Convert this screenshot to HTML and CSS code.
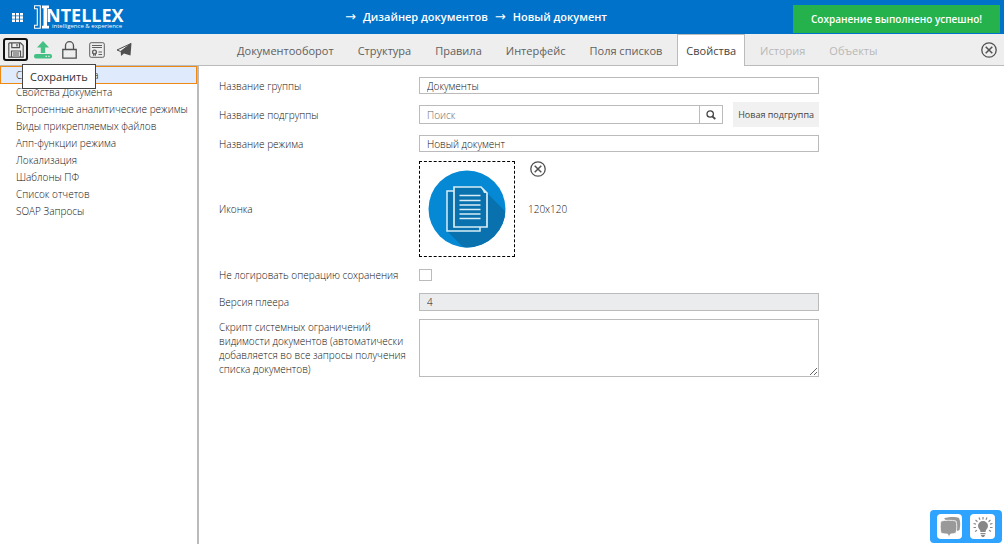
FILE: index.html
```html
<!DOCTYPE html>
<html lang="ru">
<head>
<meta charset="utf-8">
<title>Дизайнер документов</title>
<link rel="stylesheet" href="styles.css">
</head>
<body>
<header class="header">
  <button class="apps" type="button" aria-label="Меню">
    <svg width="11" height="9" viewBox="0 0 11 9" fill="#fff"><path d="M0 0h3v2.400H0zM4 0h3v2.400H4zM8 0h3v2.400H8zM0 3.300h3v2.400H0zM4 3.300h3v2.400H4zM8 3.300h3v2.400H8zM0 6.600h3V9H0zM4 6.600h3V9H4zM8 6.600h3V9H8z"/></svg>
  </button>
  <a class="logo" href="#" aria-label="Intellex">
    <svg width="94" height="25" viewBox="0 0 94 25">
      <path d="M0 .7h6.300v22.600H0M0 3.700h3.300v16.600H0M.5.7v3M.5 20.300v3" fill="none" stroke="#fff" stroke-width="1.100"/>
      <path d="M8 .5h7v2.700h-2v17.600h2v2.700H8v-2.700h1.500V3.200H8z" fill="#fff"/>
      <text class="logo-name" x="12" y="17">NTELLEX</text>
      <text class="logo-sub" x="18" y="23">intelligence &amp; experience</text>
    </svg>
  </a>
  <nav class="crumbs" aria-label="Путь">
    <span class="arrow">→</span><a href="#">Дизайнер документов</a>
    <span class="arrow">→</span><a href="#">Новый документ</a>
  </nav>
  <div class="toast" role="status">Сохранение выполнено успешно!</div>
</header>

<div class="toolbar">
  <div class="tools">
    <div class="tool-wrap">
      <button class="tool tool-focus" type="button" aria-label="Сохранить">
        <svg width="16" height="16" viewBox="0 0 16 16" fill="none" stroke="#505050" stroke-width="1.200"><path d="M1.500 .8h11l2.700 2.700v11.700H.8V1.500zM3.800 1v4.700h7.700V1M9 2v2.500M3.500 15V9h9v6M5 11h6M5 13h6"/></svg>
      </button>
      <span class="tooltip" role="tooltip">Сохранить</span>
    </div>
    <button class="tool" type="button" aria-label="Выгрузить">
      <svg width="18" height="18" viewBox="0 0 18 18"><path d="M9 0l6 6.500h-3.800V12H6.800V6.500H3z" fill="#45c084"/><rect y="13" width="18" height="4.600" rx="2" fill="#45c084"/><path d="M11.500 15.300h1.300M14.300 15.300h1.300" stroke="#eee" stroke-width="1.300"/></svg>
    </button>
    <button class="tool" type="button" aria-label="Заблокировать">
      <svg width="15" height="18" viewBox="0 0 15 18" fill="none" stroke="#505050" stroke-width="1.300"><path d="M.8 8.500h13.400v8.700H.8zM3.500 8.500V4.700a4 4 0 0 1 8 0v3.800"/></svg>
    </button>
    <button class="tool" type="button" aria-label="Сертификат">
      <svg width="16" height="16" viewBox="0 0 16 16" fill="none" stroke="#606060"><rect x=".7" y=".7" width="14.600" height="14.600" rx="1.500"/><path d="M3 3.500h10M3 5.500h10M9.500 10h3.500M9.500 12.500h3.500"/><circle cx="5.500" cy="10" r="1.900" stroke-width="1.400"/><path d="M4.500 11.500v2l1-.6 1 .6v-2"/></svg>
    </button>
    <button class="tool" type="button" aria-label="Отправить">
      <svg width="16" height="15" viewBox="0 0 16 15"><path d="M15 1.500L1 8l3.700 1.500z" fill="#eee" stroke="#505050"/><path d="M15.500 1L4.700 9.300 5 14l3-2.500 6.500 2z" fill="#505050"/></svg>
    </button>
  </div>
  <nav class="tabs">
    <a class="tab" href="#">Документооборот</a>
    <a class="tab" href="#">Структура</a>
    <a class="tab" href="#">Правила</a>
    <a class="tab" href="#">Интерфейс</a>
    <a class="tab" href="#">Поля списков</a>
    <a class="tab tab-active" href="#" aria-current="page">Свойства</a>
    <a class="tab tab-off" href="#">История</a>
    <a class="tab tab-off" href="#">Объекты</a>
  </nav>
  <button class="close" type="button" aria-label="Закрыть">
    <svg width="16" height="16" viewBox="0 0 16 16" fill="none" stroke="#505050" stroke-width="1.300"><circle cx="8" cy="8" r="7.200"/><path d="M4.700 4.700l6.600 6.600M11.300 4.700l-6.600 6.600" stroke-width="1.500"/></svg>
  </button>
</div>

<div class="body">
  <nav class="side">
    <a class="side-item side-active" href="#">Свойства режима</a>
    <a class="side-item" href="#">Свойства Документа</a>
    <a class="side-item" href="#">Встроенные аналитические режимы</a>
    <a class="side-item" href="#">Виды прикрепляемых файлов</a>
    <a class="side-item" href="#">Апп-функции режима</a>
    <a class="side-item" href="#">Локализация</a>
    <a class="side-item" href="#">Шаблоны ПФ</a>
    <a class="side-item" href="#">Список отчетов</a>
    <a class="side-item" href="#">SOAP Запросы</a>
  </nav>
  <main class="main">
    <form class="form">
      <div class="row">
        <label for="group">Название группы</label>
        <input class="field" id="group" type="text" value="Документы">
      </div>
      <div class="row">
        <label for="subgroup">Название подгруппы</label>
        <div class="sub">
          <div class="search">
            <input class="search-input" id="subgroup" type="text" placeholder="Поиск">
            <button class="search-btn" type="button" aria-label="Найти">
              <svg width="10" height="10" viewBox="0 0 10 10" fill="none" stroke="#444"><circle cx="4.200" cy="4" r="3.200" stroke-width="1.300"/><path d="M6.300 6.300L9.300 9" stroke-width="1.800"/></svg>
            </button>
          </div>
          <button class="new-btn" type="button">Новая подгруппа</button>
        </div>
      </div>
      <div class="row">
        <label for="mode">Название режима</label>
        <input class="field" id="mode" type="text" value="Новый документ">
      </div>
      <div class="row row-icon">
        <span>Иконка</span>
        <div class="icon-field">
          <div class="icon-box">
            <svg width="78" height="78" viewBox="0 0 78 78">
              <defs><clipPath id="disc"><circle cx="39" cy="39" r="38.500"/></clipPath></defs>
              <circle cx="39" cy="39" r="38.500" fill="#0689d4"/>
              <path d="M58 22l30 30v40H50L19 61l34-5z" fill="#0871ae" clip-path="url(#disc)"/>
              <path d="M19 21h7v36h26v4H19z" fill="#0871ae"/>
              <path d="M26 21h-7v40h33v-4" fill="none" stroke="#d8edf5" stroke-width="1.500"/>
              <path d="M26 17h27l6 6v34H26z" fill="#0871ae" stroke="#d8edf5" stroke-width="1.700"/>
              <path d="M53 17l6 6h-3z" fill="#d8edf5"/>
              <path d="M31.500 25.500h21M31.500 30.500h21M31.500 35h21M31.500 39.500h21M31.500 44h21M31.500 48.500h21" stroke="#d8edf5" stroke-width="1.500"/>
            </svg>
          </div>
          <div class="icon-info">
            <button class="clear" type="button" aria-label="Удалить иконку">
              <svg width="16" height="16" viewBox="0 0 16 16" fill="none" stroke="#505050" stroke-width="1.300"><circle cx="8" cy="8" r="7.200"/><path d="M4.700 4.700l6.600 6.600M11.300 4.700l-6.600 6.600" stroke-width="1.500"/></svg>
            </button>
            <span>120x120</span>
          </div>
        </div>
      </div>
      <div class="row row-check">
        <label for="nolog">Не логировать операцию сохранения</label>
        <input class="check" id="nolog" type="checkbox">
      </div>
      <div class="row">
        <label for="player">Версия плеера</label>
        <input class="field field-ro" id="player" type="text" value="4" readonly>
      </div>
      <div class="row">
        <label for="script">Скрипт системных ограничений видимости документов (автоматически добавляется во все запросы получения списка документов)</label>
        <textarea class="area" id="script"></textarea>
      </div>
    </form>
  </main>
</div>

<div class="help">
  <button class="help-btn" type="button" aria-label="Чат">
    <svg width="22" height="22" viewBox="0 0 22 22" fill="#999"><path d="M5 2.500C9 .5 17 .5 20 2c1.500 3 1.500 8 .5 12l-2 1"/><path d="M2 5c4-1 11-1 15 0 1 3 1 8 0 12-2 .7-4 1-5.500 1L10 21l-1.500-3c-2 0-5-.3-6.500-1C1 13 1 8 2 5z" stroke="#fff" stroke-width=".8"/></svg>
  </button>
  <button class="help-btn" type="button" aria-label="Подсказка">
    <svg width="22" height="22" viewBox="0 0 22 22" fill="#888"><path d="M11 5a5 5 0 0 1 5 5c0 2.500-2.500 3.500-2.500 6h-5C8.500 13.500 6 12.500 6 10a5 5 0 0 1 5-5zM8.500 17h5v1.200h-5zM8.800 19h4.400L12 21h-2z"/><path d="M11 1v2.500M7 1.500l1 2.300M15 1.500l-1 2.300M3.500 4l2 1.700M18.500 4l-2 1.700M1.500 7.500l2.500.7M20.500 7.500l-2.500.7M1.500 11.500H4M20.500 11.500H18M3 15.500l2-1.300M19 15.500l-2-1.300" stroke="#888" stroke-width="1.200"/></svg>
  </button>
</div>
</body>
</html>
```

FILE: styles.css
```css
* { box-sizing: border-box; }

body {
  margin: 0;
  min-height: 100vh;
  display: flex;
  flex-direction: column;
  background: #fff;
  color: #111;
  font-family: "Open Sans", "Noto Sans", sans-serif;
  font-size: 10px;
  font-weight: 300;
  line-height: 14px;
}

a { color: inherit; text-decoration: none; }
button, input, textarea { font: inherit; color: inherit; margin: 0; }
button { padding: 0; border: 0; background: none; }
svg { display: block; }

.header {
  position: relative;
  display: flex;
  align-items: center;
  height: 34px;
  background: #0072c9;
  color: #fff;
}
.apps { display: grid; place-items: center; width: 34px; height: 34px; }
.logo-name { font: 700 18px "Open Sans", sans-serif; fill: #fff; }
.logo-sub { font: 6px "Open Sans", sans-serif; fill: #fff; }
.crumbs {
  display: flex;
  align-items: center;
  gap: 7px;
  height: 32px;
  margin-left: 217px;
  font-size: 11px;
  font-weight: 600;
}
.arrow { font-family: "DejaVu Sans", sans-serif; font-size: 13px; font-weight: 400; }
.toast {
  position: absolute;
  top: 5px;
  right: 4px;
  padding: 7px 18px;
  background: #25b14c;
  font-weight: 600;
}

.toolbar {
  display: flex;
  height: 32px;
  background: #eee;
  border-bottom: 1px solid #bbb;
}
.tools { display: flex; align-items: center; gap: 2px; width: 228px; padding-left: 3px; }
.tool-wrap { position: relative; }
.tool { display: grid; place-items: center; width: 25px; height: 23px; }
.tool-focus { border: 2px solid #111; border-radius: 3px; }
.tooltip {
  position: absolute;
  z-index: 1;
  top: 26px;
  left: 19px;
  padding: 4px 7px;
  background: #fff;
  border: 1px solid #444;
  color: #333;
  font-size: 11px;
  font-weight: 400;
  line-height: 15px;
}
.tabs { display: flex; gap: 6px; color: #606060; font-size: 11px; font-weight: 400; }
.tab {
  height: 32px;
  padding: 0 8px;
  border: 1px solid transparent;
  border-bottom: 0;
  line-height: 32px;
  white-space: nowrap;
}
.tab-active { background: #fff; border-color: #bbb; color: #444; }
.tab-off { color: #b8b8b8; }
.close { margin: 0 7px 0 auto; }

.body { display: flex; flex: 1; }
.side { width: 199px; border-right: 2px solid #bbb; }
.side-item { display: block; padding-left: 16px; line-height: 17px; }
.side-active {
  padding-left: 15px;
  border: 1px solid #ee8a13;
  background: #dfeafc;
  line-height: 16px;
}

.main { flex: 1; padding: 11px 20px; }
.form { display: flex; flex-direction: column; gap: 8px; }
.row { display: grid; grid-template-columns: 190px minmax(0, 400px); column-gap: 10px; align-items: center; }
.field { width: 100%; height: 17px; padding: 0 7px; border: 1px solid #bbb; border-radius: 0; outline: 0; background: #fff; }
.field-ro { height: 18px; background: #ebecee; }
.sub { display: flex; align-items: center; gap: 10px; }
.search { display: flex; flex: 1; height: 19px; border: 1px solid #bbb; }
.search-input { flex: 1; min-width: 0; padding: 0 7px; border: 0; outline: 0; }
.search-input::placeholder { color: #666; }
.search-btn { display: grid; place-items: center; width: 23px; border-left: 1px solid #bbb; }
.new-btn { height: 25px; padding: 0 5px; background: #f1f1f1; color: #444; font-size: 9px; font-weight: 400; }
.row-icon { padding-top: 1px; }
.icon-field { display: flex; gap: 13px; }
.icon-box { display: grid; place-items: center; width: 96px; height: 96px; border: 1px dashed #000; }
.icon-info { display: flex; flex-direction: column; gap: 25px; }
.clear { width: 20px; padding-left: 2px; }
.row-check { min-height: 20px; }
.check { appearance: none; width: 13px; height: 12px; margin: 0; border: 1px solid #bbb; background: #fff; }
.area { display: block; width: 100%; height: 58px; padding: 2px 7px; border: 1px solid #bbb; outline: 0; background: #fff; }

.help {
  position: fixed;
  right: 2px;
  bottom: 1px;
  display: flex;
  gap: 8px;
  padding: 4px 7px;
  border-radius: 4px;
  background: #2ea3ff;
}
.help-btn { display: grid; place-items: center; width: 25px; height: 25px; border-radius: 4px; background: #fff; }
```
